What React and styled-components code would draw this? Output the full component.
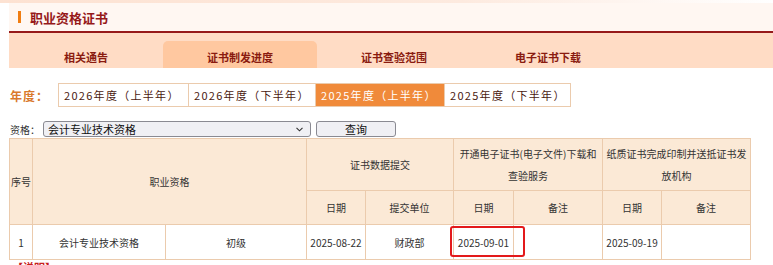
import React from "react";
import styled, { createGlobalStyle } from "styled-components";

const Global = createGlobalStyle`
  html, body { margin: 0; padding: 0; background: #fff; }
  body { font-family: "Noto Sans CJK SC", "Noto Sans", sans-serif; color: #333; }
`;

const TopStrip = styled.div`
  height: 3px;
  background: linear-gradient(90deg, #fde2d2 0%, #fdeadf 60%, #ffffff 100%);
`;

const Panel = styled.div`
  margin-left: 9px;
`;

const TitleBar = styled.div`
  height: 28px;
  background: #fff7f2;
  border-bottom: 2px solid #96191a;
  display: flex;
  align-items: center;
  padding-left: 9px;
  gap: 9px;
`;

const TitleMark = styled.span`
  width: 3px;
  height: 12px;
  background: #f07d12;
`;

const TitleText = styled.h1`
  margin: 0;
  font-size: 13px;
  font-weight: 700;
  color: #96191a;
  letter-spacing: 0;
`;

const TabBar = styled.div`
  height: 35px;
  background: #ffdcc5;
  display: flex;
  align-items: flex-end;
`;

const Tab = styled.div`
  width: 154px;
  height: 27px;
  display: flex;
  align-items: center;
  justify-content: center;
  padding-top: 5px;
  box-sizing: border-box;
  font-size: 11px;
  font-weight: 700;
  color: #8a1b10;
  border-radius: 5px 5px 0 0;
  background: ${(p) => (p.$active ? "#ffc8a0" : "transparent")};
`;

const Content = styled.div`
  padding: 15px 0 0 9px;
`;

const YearRow = styled.div`
  display: flex;
  align-items: center;
  height: 24px;
`;

const YearLabel = styled.span`
  width: 48px;
  padding-left: 1px;
  font-size: 12px;
  font-weight: 700;
  color: #d9792c;
  letter-spacing: 1px;
`;

const YearGroup = styled.div`
  display: flex;
  border: 1px solid #ebcbad;
  height: 22px;
`;

const YearBtn = styled.div`
  width: ${(p) => p.$w}px;
  display: flex;
  align-items: center;
  padding-left: 5px;
  box-sizing: border-box;
  font-size: 11px;
  letter-spacing: 1.3px;
  color: ${(p) => (p.$active ? "#fff" : "#4a1a10")};
  background: ${(p) => (p.$active ? "#f08a3a" : "#fff")};
  border-left: ${(p) => (p.$first ? "none" : "1px solid #ebcbad")};
`;

const FilterRow = styled.div`
  display: flex;
  align-items: center;
  margin-top: 14px;
  height: 16px;
`;

const FilterLabel = styled.span`
  width: 33px;
  font-size: 10px;
  color: #333;
  padding-left: 1px;
`;

const SelectBox = styled.div`
  width: 268px;
  height: 16px;
  box-sizing: border-box;
  border: 1px solid #8a8a92;
  border-radius: 3px;
  background: #f0f0f4;
  display: flex;
  align-items: center;
  justify-content: space-between;
  padding: 0 7px 0 4px;
  font-size: 11px;
  color: #111;
`;

const Chevron = styled.svg`
  width: 7px;
  height: 5px;
`;

const QueryBtn = styled.div`
  margin-left: 5px;
  width: 80px;
  height: 16px;
  box-sizing: border-box;
  border: 1px solid #8a8a92;
  border-radius: 3px;
  background: #f0f0f4;
  display: flex;
  align-items: center;
  justify-content: center;
  font-size: 11px;
  color: #111;
`;

const Table = styled.table`
  margin-top: 1px;
  border-collapse: collapse;
  table-layout: fixed;
  width: 742px;
  font-size: 10px;
  color: #333;
`;

const Th = styled.th`
  font-weight: 400;
  background: #fbe9d6;
  border: 1px solid #ebcbad;
  text-align: center;
  padding: 0 ${(p) => (p.$tight ? 0 : 2)}px;
  white-space: ${(p) => (p.$tight ? "nowrap" : "normal")};
  line-height: 22px;
  height: ${(p) => p.$h || "auto"};
`;

const Td = styled.td`
  border: 1px solid #ebcbad;
  text-align: center;
  height: 32px;
  background: #fff;
  position: relative;
`;

const Highlight = styled.span`
  position: absolute;
  z-index: 2;
  left: -4px;
  right: -12px;
  top: 1px;
  bottom: 2px;
  border: 2px solid #e3191b;
  border-radius: 3px;
  pointer-events: none;
`;

const Note = styled.div`
  margin: 1px 0 0 3px;
  font-size: 11px;
  font-weight: 700;
  color: #c8201c;
  line-height: 12px;
`;

const widths = [23, 133, 141, 59, 88, 60, 89, 59, 89];
const years = [
  { t: "2026年度（上半年）", w: 129 },
  { t: "2026年度（下半年）", w: 127 },
  { t: "2025年度（上半年）", w: 129, active: true },
  { t: "2025年度（下半年）", w: 126 },
];
const tabs = ["相关通告", "证书制发进度", "证书查验范围", "电子证书下载"];

export default function App() {
  return (
    <>
      <Global />
      <TopStrip />
      <Panel>
        <TitleBar>
          <TitleMark />
          <TitleText>职业资格证书</TitleText>
        </TitleBar>
        <TabBar>
          {tabs.map((t, i) => (
            <Tab key={t} $active={i === 1}>{t}</Tab>
          ))}
        </TabBar>
      </Panel>
      <Content>
        <YearRow>
          <YearLabel>年度：</YearLabel>
          <YearGroup>
            {years.map((y, i) => (
              <YearBtn key={y.t} $w={y.w} $active={y.active} $first={i === 0}>
                {y.t}
              </YearBtn>
            ))}
          </YearGroup>
        </YearRow>
        <FilterRow>
          <FilterLabel>资格：</FilterLabel>
          <SelectBox>
            <span>会计专业技术资格</span>
            <Chevron viewBox="0 0 7 5">
              <path d="M0.5 0.8 L3.5 3.8 L6.5 0.8" fill="none" stroke="#333" strokeWidth="1.1" />
            </Chevron>
          </SelectBox>
          <QueryBtn>查询</QueryBtn>
        </FilterRow>
      </Content>
      <Panel>
        <Table>
          <colgroup>
            {widths.map((w, i) => (
              <col key={i} style={{ width: w }} />
            ))}
          </colgroup>
          <thead>
            <tr>
              <Th rowSpan={2} $tight>序号</Th>
              <Th rowSpan={2} colSpan={2}>职业资格</Th>
              <Th colSpan={2} $h="51px">证书数据提交</Th>
              <Th colSpan={2}>开通电子证书(电子文件)下载和<br />查验服务</Th>
              <Th colSpan={2}>纸质证书完成印制并送抵证书发<br />放机构</Th>
            </tr>
            <tr>
              <Th $h="33px">日期</Th>
              <Th>提交单位</Th>
              <Th>日期</Th>
              <Th>备注</Th>
              <Th>日期</Th>
              <Th>备注</Th>
            </tr>
          </thead>
          <tbody>
            <tr>
              <Td>1</Td>
              <Td>会计专业技术资格</Td>
              <Td>初级</Td>
              <Td>2025-08-22</Td>
              <Td>财政部</Td>
              <Td>
                2025-09-01
                <Highlight />
              </Td>
              <Td></Td>
              <Td>2025-09-19</Td>
              <Td></Td>
            </tr>
          </tbody>
        </Table>
        <Note>【说明】</Note>
      </Panel>
    </>
  );
}
